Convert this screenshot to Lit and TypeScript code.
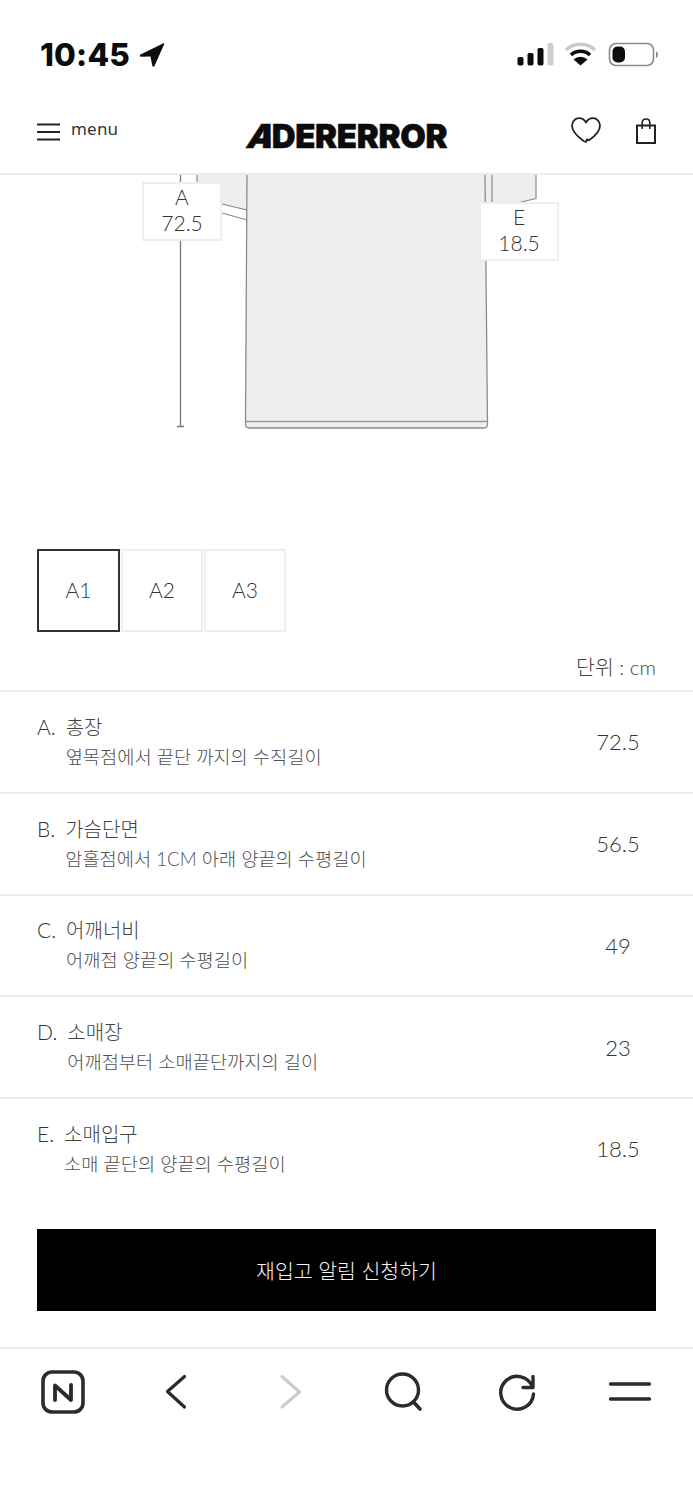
import { LitElement, html, css, svg } from 'lit';
import { customElement } from 'lit/decorators.js';

const SPECS = [
  { mark: 'A.', name: '총장', desc: '옆목점에서 끝단 까지의 수직길이', value: '72.5' },
  { mark: 'B.', name: '가슴단면', desc: '암홀점에서 1CM 아래 양끝의 수평길이', value: '56.5' },
  { mark: 'C.', name: '어깨너비', desc: '어깨점 양끝의 수평길이', value: '49' },
  { mark: 'D.', name: '소매장', desc: '어깨점부터 소매끝단까지의 길이', value: '23' },
  { mark: 'E.', name: '소매입구', desc: '소매 끝단의 양끝의 수평길이', value: '18.5' },
];

const SIZES = ['A1', 'A2', 'A3'];

// nav icons, each drawn in a 60x60 box centred on its grid cell
const NAV_ICONS = [
  svg`<rect x="10" y="11" width="40" height="40" rx="9" fill="none" stroke="#2b2b2b" stroke-width="3.6"/>
      <path d="M22 39V24.5L38 39V24" fill="none" stroke="#2b2b2b" stroke-width="3.8" stroke-linejoin="round" stroke-linecap="round"/>`,
  svg`<path d="M37.5 15.5 L20.5 30.5 L37.5 46" fill="none" stroke="#2b2b2b" stroke-width="3.2" stroke-linecap="round" stroke-linejoin="round"/>`,
  svg`<path d="M22 15.5 L39.5 31 L22 46" fill="none" stroke="#cccccc" stroke-width="3.2" stroke-linecap="round" stroke-linejoin="round"/>`,
  svg`<circle cx="28.5" cy="29" r="16" fill="none" stroke="#2b2b2b" stroke-width="3.4"/>
      <path d="M39.5 41 L46 48" fill="none" stroke="#2b2b2b" stroke-width="3.6" stroke-linecap="round"/>`,
  svg`<path d="M44.5 26 A16.4 16.4 0 1 0 45.5 33" fill="none" stroke="#2b2b2b" stroke-width="3.4" stroke-linecap="round"/>
      <path d="M45 15.5 V26.5 H35" fill="none" stroke="#2b2b2b" stroke-width="3.4" stroke-linecap="round" stroke-linejoin="round"/>`,
  svg`<path d="M9.5 23H48.5M9.5 38H48.5" fill="none" stroke="#2b2b2b" stroke-width="3.4" stroke-linecap="round"/>`,
];

@customElement('app-root')
export class AppRoot extends LitElement {
  static styles = css`
    :host {
      display: block;
      width: 693px;
      height: 1500px;
      background: #fff;
      color: #333;
      font-family: 'Lato', 'Noto Sans CJK KR', sans-serif;
      font-weight: 300;
      overflow: hidden;
    }

    .status {
      height: 90px;
      position: relative;
    }
    .status-left {
      display: flex;
      align-items: center;
      gap: 9px;
      padding: 37px 0 0 40px;
    }
    .time {
      font-family: 'Inter', sans-serif;
      font-weight: 800;
      font-size: 31.5px;
      line-height: 35px;
      letter-spacing: 0.2px;
      color: #0c0c0c;
    }
    .status-right {
      position: absolute;
      left: 510px;
      top: 36px;
    }

    .header {
      height: 83px;
      border-bottom: 2px solid #ececec;
      display: grid;
      grid-template-columns: 1fr auto 1fr;
      align-items: center;
      padding: 0 37px;
    }
    .menu {
      display: flex;
      align-items: center;
      gap: 11px;
      margin-top: -6px;
      font-family: 'Noto Sans', sans-serif;
      font-weight: 400;
      font-size: 17px;
      letter-spacing: 0.2px;
      color: #333;
    }
    .menu svg {
      margin-top: 6px;
    }
    .logo {
      font-family: 'Inter', sans-serif;
      font-weight: 900;
      font-size: 33px;
      letter-spacing: -0.3px;
      line-height: 34px;
      color: #0c0c0c;
      -webkit-text-stroke: 0.5px #0c0c0c;
      margin-top: 8px;
    }
    .logo-a {
      display: inline-block;
      transform: skewX(-18deg);
      margin: 0 -3px 0 3px;
    }
    .header-icons {
      display: flex;
      justify-content: flex-end;
      align-items: center;
      gap: 35px;
      margin-top: -2px;
    }

    .diagram {
      position: relative;
      height: 374px;
    }
    .diagram svg {
      display: block;
    }
    .tag {
      position: absolute;
      box-sizing: border-box;
      background: #fff;
      border: 2px solid #eee;
      text-align: center;
      font-size: 21px;
      line-height: 25.5px;
      color: #333;
    }
    .tag-a { left: 142px; top: 7px; width: 80px; height: 59px; }
    .tag-e { left: 479px; top: 27px; width: 80px; height: 59px; }

    .sizes {
      display: flex;
      gap: 1px;
      padding-left: 37px;
    }
    .size {
      box-sizing: border-box;
      width: 82px;
      height: 83px;
      display: flex;
      align-items: center;
      justify-content: center;
      padding-bottom: 2px;
      border: 2px solid #eee;
      font-size: 21px;
      color: #333;
    }
    .size.active {
      border-color: #333;
      width: 83px;
    }

    .unit {
      text-align: right;
      padding: 22px 37px 0 0;
      height: 36px;
      font-size: 20.5px;
      line-height: 26px;
      color: #444;
      border-bottom: 2px solid #ececec;
    }

    .row {
      box-sizing: border-box;
      height: 101.75px;
      border-bottom: 2px solid #ececec;
      display: grid;
      grid-template-columns: auto 1fr 76px;
      column-gap: 10px;
      grid-template-rows: 30px 30px;
      align-content: center;
      padding: 0 37px;
    }
    .row:last-child {
      border-bottom-color: transparent;
    }
    .mark {
      font-size: 21px;
      line-height: 30px;
      color: #333;
    }
    .name {
      font-size: 20px;
      line-height: 30px;
      color: #444;
    }
    .desc {
      grid-column: 2;
      font-size: 18.7px;
      line-height: 30px;
      color: #4f4f4f;
      white-space: nowrap;
    }
    .value {
      grid-column: 3;
      grid-row: 1 / span 2;
      align-self: center;
      text-align: center;
      font-size: 22px;
      color: #333;
    }

    .restock {
      display: flex;
      align-items: center;
      justify-content: center;
      width: 619px;
      height: 82px;
      margin: 28px 0 0 37px;
      background: #000;
      color: #f4f4f4;
      font-size: 20.5px;
    }

    .nav {
      margin-top: 36px;
      border-top: 2px solid #e8e8e8;
      padding: 12px 0 0 6px;
      display: grid;
      grid-template-columns: repeat(6, 113.7px);
      justify-items: center;
    }
  `;

  private renderStatusIcons() {
    return html`
      <svg width="160" height="36" viewBox="510 36 160 36">
        <rect x="517.5" y="57" width="6" height="8.5" rx="1.8" fill="#0c0c0c"/>
        <rect x="527.5" y="53" width="6" height="12.5" rx="1.8" fill="#0c0c0c"/>
        <rect x="537.5" y="48" width="6" height="17.5" rx="1.8" fill="#0c0c0c"/>
        <rect x="547.5" y="43" width="6" height="22.5" rx="1.8" fill="#cfcfcf"/>
        <path d="M566 50 A21 21 0 0 1 595 50" fill="none" stroke="#c9c9c9" stroke-width="3.6"/>
        <path d="M571 55 A14 14 0 0 1 590 55" fill="none" stroke="#0c0c0c" stroke-width="3.6"/>
        <path d="M580.5 65.5 L573.5 59.5 A10 10 0 0 1 587.5 59.5 Z" fill="#0c0c0c"/>
        <rect x="609.5" y="43.5" width="44" height="22" rx="6.5" fill="none" stroke="#8a8a8a" stroke-width="1.6"/>
        <rect x="612.5" y="46.5" width="12.5" height="16" rx="5" fill="#0c0c0c"/>
        <path d="M656 51 A4 4 0 0 1 656 58 Z" fill="#8a8a8a"/>
      </svg>
    `;
  }

  private renderDiagram() {
    return html`
      <div class="diagram">
        <svg width="693" height="374" viewBox="0 175 693 374">
          <path d="M197 175H535.5L536 198.5L492 208H247V211L197 199Z" fill="#eee"/>
          <path d="M247 175L245.5 421V424Q245.5 428 249 428H484Q487.5 428 487.5 424V421L485 175" fill="#eee" stroke="#8c8c8c" stroke-width="1.3"/>
          <path d="M245.5 421.5H487.5" fill="none" stroke="#9a9a9a" stroke-width="1.3"/>
          <path d="M492 175V208M536 175V198.5L521 202M197 175V182M222 204L247 210M222 213L247 220" fill="none" stroke="#8c8c8c" stroke-width="1.2"/>
          <path d="M180.5 175V426M177 426.5H184" fill="none" stroke="#777" stroke-width="1.3"/>
        </svg>
        <div class="tag tag-a">A<br />72.5</div>
        <div class="tag tag-e">E<br />18.5</div>
      </div>
    `;
  }

  render() {
    return html`
      <div class="status">
        <div class="status-left">
          <span class="time">10:45</span>
          <svg width="26" height="26" viewBox="0 0 26 26">
            <path d="M1.5 12.5L24 1.5C25 1 25.5 1.5 25 2.5L15.5 24C15 25.2 13.5 25 13.3 23.8L11.5 14.5L2 14.8C0.8 14.8 0.6 13 1.5 12.5Z" fill="#0c0c0c"/>
          </svg>
        </div>
        <div class="status-right">${this.renderStatusIcons()}</div>
      </div>

      <div class="header">
        <div class="menu">
          <svg width="23" height="18" viewBox="0 0 23 18">
            <path d="M0 1.5H23M0 9H23M0 16.5H23" fill="none" stroke="#222" stroke-width="2"/>
          </svg>
          <span>menu</span>
        </div>
        <div class="logo"><span class="logo-a">A</span>DERERROR</div>
        <div class="header-icons">
          <svg width="30" height="27" viewBox="0 0 30 27">
            <path d="M12.5 24C7 20 1 15 1 8.5C1 4.3 4.3 1.2 8 1.2C11 1.2 13.6 2.8 15 5.5C16.4 2.8 19 1.2 22 1.2C25.7 1.2 29 4.3 29 8.5C29 15 23.5 19.5 18 23.2L16 22.4L15 25Z" fill="none" stroke="#222" stroke-width="1.8" stroke-linejoin="round"/>
          </svg>
          <svg width="20" height="26" viewBox="0 0 20 26">
            <path d="M1 7.5H19V25H1Z" fill="none" stroke="#222" stroke-width="2"/>
            <path d="M6.2 11V4.5C6.2 2.4 7.8 1 10 1C12.2 1 13.8 2.4 13.8 4.5V11" fill="none" stroke="#222" stroke-width="1.6"/>
          </svg>
        </div>
      </div>

      ${this.renderDiagram()}

      <div class="sizes">
        ${SIZES.map((s, i) => html`<div class="size ${i === 0 ? 'active' : ''}">${s}</div>`)}
      </div>

      <div class="unit">단위 : cm</div>

      <div class="specs">
        ${SPECS.map(
          (s) => html`
            <div class="row">
              <span class="mark">${s.mark}</span>
              <span class="name">${s.name}</span>
              <span class="desc">${s.desc}</span>
              <span class="value">${s.value}</span>
            </div>
          `
        )}
      </div>

      <div class="restock">재입고 알림 신청하기</div>

      <div class="nav">
        ${NAV_ICONS.map(
          (icon) => html`<svg width="60" height="60" viewBox="0 0 60 60">${icon}</svg>`
        )}
      </div>
    `;
  }
}
